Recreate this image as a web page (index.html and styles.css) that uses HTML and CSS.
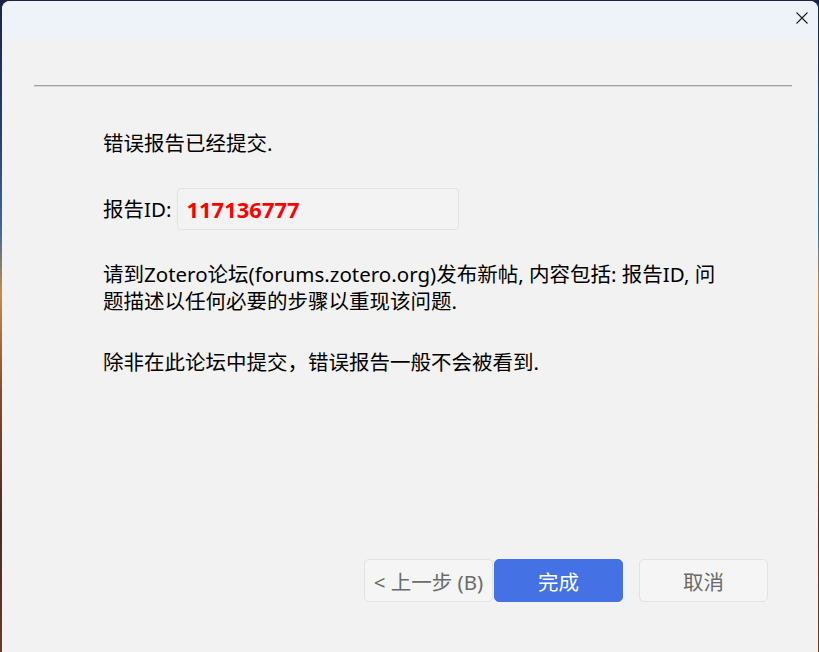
FILE: index.html
```html
<!DOCTYPE html>
<html lang="zh-CN">
<head>
<meta charset="utf-8">
<title>Zotero 错误报告</title>
<link rel="stylesheet" href="styles.css">
</head>
<body>
<div class="window">
  <div class="titlebar">
    <button class="close" aria-label="关闭">
      <svg width="12" height="12" viewBox="0 0 12 12"><path d="M0.5 0.5 L11.5 11.5 M11.5 0.5 L0.5 11.5" stroke="#1a1a1a" stroke-width="1.1" fill="none"/></svg>
    </button>
  </div>
  <div class="separator"></div>
  <div class="content">
    <p class="line">错误报告已经提交.</p>
    <div class="id-row">
      <span class="id-label">报告ID:</span>
      <div class="id-box">117136777</div>
    </div>
    <p class="para">请到Zotero论坛(forums.zotero.org)发布新帖, 内容包括: 报告ID, 问题描述以任何必要的步骤以重现该问题.</p>
    <p class="para second">除非在此论坛中提交，错误报告一般不会被看到.</p>
  </div>
  <div class="buttons">
    <button class="btn back">&lt; 上一步 (B)</button>
    <button class="btn primary">完成</button>
    <button class="btn cancel">取消</button>
  </div>
</div>
</body>
</html>
```

FILE: styles.css
```css
html, body {
  margin: 0;
  padding: 0;
  height: 652px;
  overflow: hidden;
}
body {
  background: linear-gradient(180deg, #1b2347 0%, #24406e 20%, #3a6a9a 35%, #c98a4a 45%, #8a4a2a 60%, #4a2a22 80%, #6a3a28 100%);
  font-family: "Noto Sans", "Noto Sans CJK SC", sans-serif;
}
.window {
  margin: 1px 1px 0 2px;
  height: 660px;
  background: #f2f2f2;
  border-radius: 8px;
  overflow: hidden;
  display: flex;
  flex-direction: column;
}
.titlebar {
  height: 37px;
  background: #eef2f9;
  display: flex;
  justify-content: flex-end;
  align-items: flex-start;
  flex-shrink: 0;
}
.close {
  border: 0;
  background: transparent;
  padding: 0;
  margin: 11px 10px 0 0;
  width: 12px;
  height: 12px;
  display: flex;
}
.separator {
  margin: 47px 26px 0 32px;
  height: 1px;
  background: #a0a0a0;
  border-bottom: 1px solid #d6d6d6;
  flex-shrink: 0;
}
.content {
  width: 625px;
  padding: 0 0 0 101px;
  font-size: 20.5px;
  color: #000;
}
.line {
  margin: 43px 0 0;
  line-height: 27px;
}
.id-row {
  margin-top: 31px;
  display: flex;
  align-items: center;
  gap: 6px;
}
.id-label {
  line-height: 27px;
}
.id-box {
  width: 272px;
  height: 40px;
  border: 1px solid #e3e3e3;
  border-radius: 4px;
  background: #f3f3f3;
  color: #ff0000;
  font-weight: bold;
  font-size: 22px;
  line-height: 40px;
  padding-left: 8px;
}
.para {
  margin: 31px 0 0;
  line-height: 27px;
}
.para.second {
  margin-top: 34px;
}
.buttons {
  margin-top: auto;
  margin-bottom: 59px;
  display: flex;
  justify-content: flex-end;
  padding-right: 50px;
}
.btn {
  font-family: "Noto Sans", "Noto Sans CJK SC", sans-serif;
  font-size: 20.5px;
  width: 129px;
  height: 43px;
  border-radius: 5px;
  border: 1px solid #e2e2e2;
  background: #f5f5f5;
  color: #6a6a6a;
  padding: 0;
}
.btn.primary {
  margin-left: 1px;
  background: #4472e4;
  border-color: #4472e4;
  color: #ffffff;
}
.btn.cancel {
  margin-left: 16px;
}
```
